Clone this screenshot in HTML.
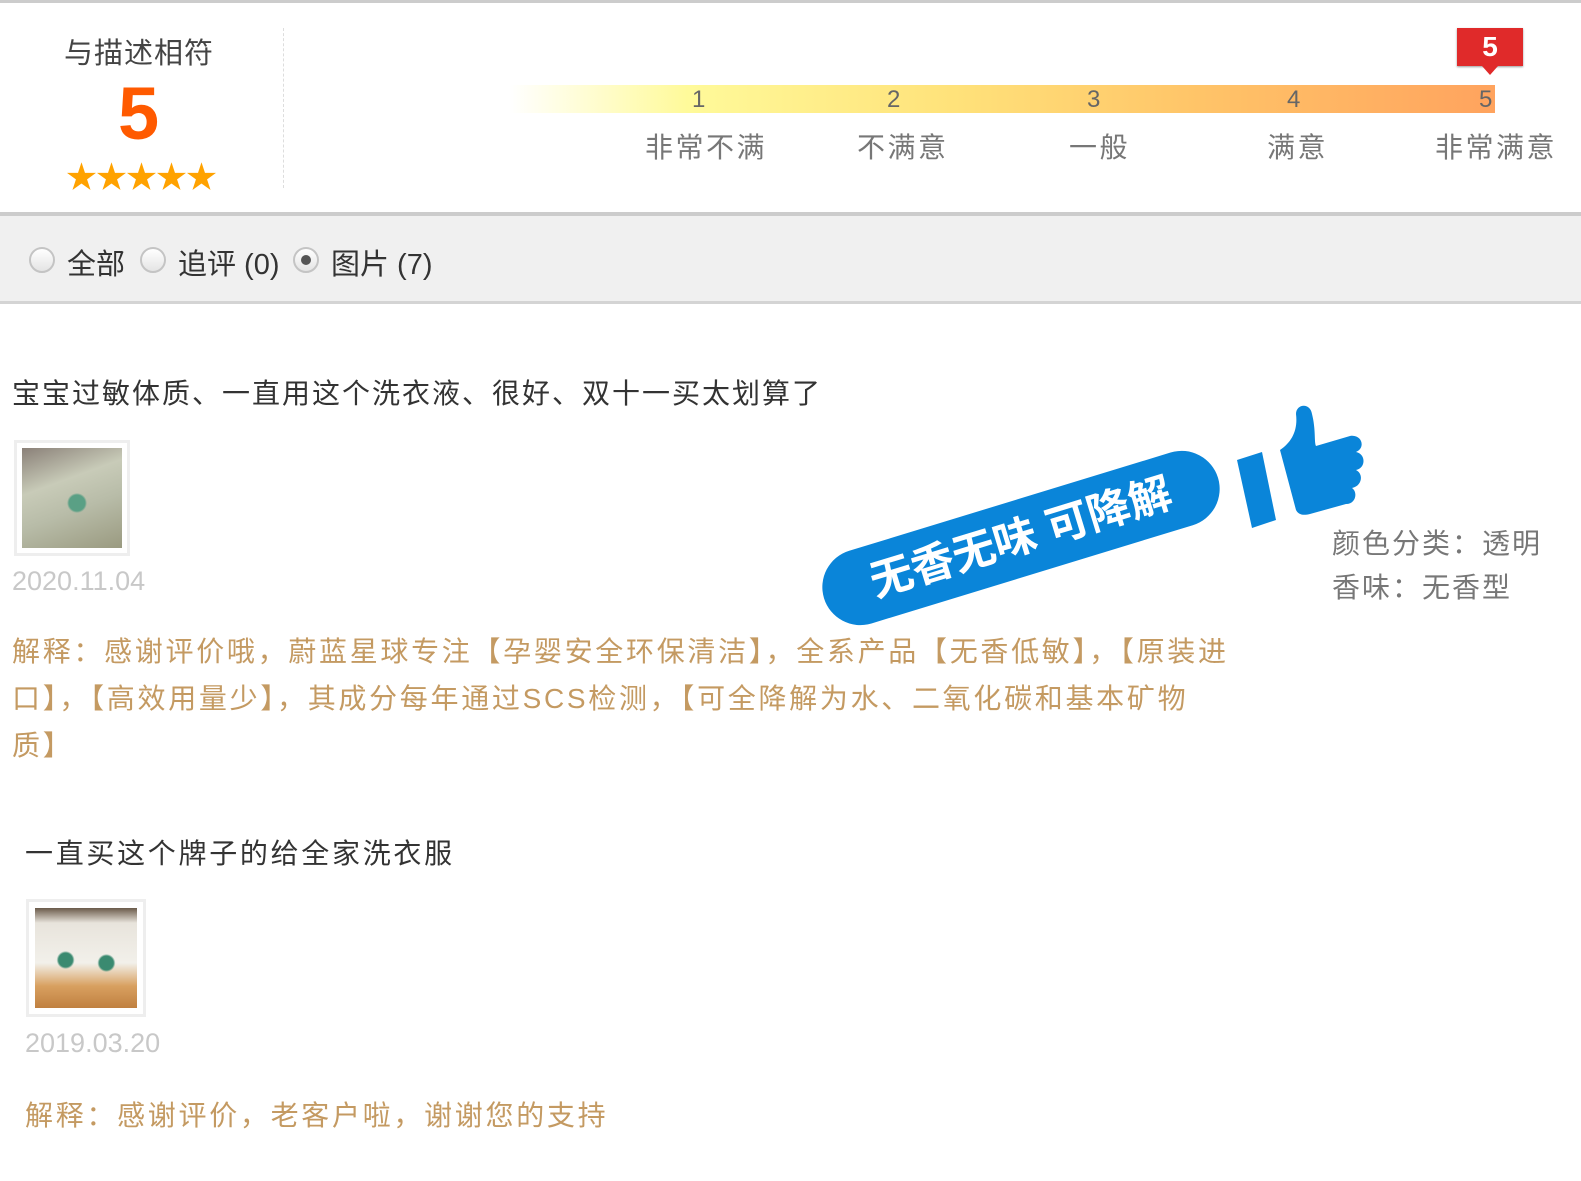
<!DOCTYPE html>
<html><head><meta charset="utf-8"><style>
*{margin:0;padding:0;box-sizing:border-box}
body{width:1581px;height:1181px;background:#fff;position:relative;overflow:hidden;font-family:"Liberation Sans","Noto Sans CJK SC",sans-serif;color:#333}
.a{position:absolute;white-space:nowrap}
.t{font-size:28px;letter-spacing:2px}
.ex{color:#c49a62;font-size:28px;line-height:47px;letter-spacing:2.7px}
.date{color:#c8c8c8;font-size:27px}
.lab{font-size:28px;color:#777;letter-spacing:2.5px}
.thumb{position:absolute;border:3px solid #eee;background:#fff}
.radio{position:absolute;width:26px;height:26px;border-radius:50%;border:2px solid #c4c4c4;background:linear-gradient(#fff,#e4e4e4);top:247px}
</style></head><body>
<div class="a" style="left:0;top:0;width:1581px;height:3px;background:#ccc"></div>
<div class="a" style="left:64px;top:30px;font-size:29px;color:#444;letter-spacing:1px">与描述相符</div>
<div class="a" style="left:118px;top:74px;font-size:74px;font-weight:bold;color:#ff5a00;line-height:80px">5</div>
<div class="a" style="left:66px;top:152px;font-size:31px;color:#ffa200;letter-spacing:-1px">★★★★★</div>
<div class="a" style="left:283px;top:28px;width:0;height:160px;border-left:1px dashed #ddd"></div>
<div class="a" style="left:510px;top:85px;width:985px;height:28px;background:linear-gradient(90deg,#fff 0%,#fffa9a 18%,#ffe27a 45%,#ffc468 70%,#ffa35e 100%)"></div>
<div class="a" style="left:692px;top:86px;font-size:24px;color:#666">1</div>
<div class="a" style="left:887px;top:86px;font-size:24px;color:#666">2</div>
<div class="a" style="left:1087px;top:86px;font-size:24px;color:#666">3</div>
<div class="a" style="left:1287px;top:86px;font-size:24px;color:#666">4</div>
<div class="a" style="left:1479px;top:86px;font-size:24px;color:#666">5</div>
<div class="a lab" style="left:645px;top:126px">非常不满</div>
<div class="a lab" style="left:857px;top:126px">不满意</div>
<div class="a lab" style="left:1069px;top:126px">一般</div>
<div class="a lab" style="left:1267px;top:126px">满意</div>
<div class="a lab" style="left:1435px;top:126px">非常满意</div>
<div class="a" style="left:1457px;top:28px;width:66px;height:38px;background:#e02a2a;color:#fff;font-size:28px;font-weight:bold;text-align:center;line-height:38px;box-shadow:0 1px 2px #999">5</div>
<div class="a" style="left:1482px;top:66px;width:0;height:0;border-left:8px solid transparent;border-right:8px solid transparent;border-top:9px solid #e02a2a"></div>
<div class="a" style="left:0;top:212px;width:1581px;height:4px;background:#ccc"></div>
<div class="a" style="left:0;top:216px;width:1581px;height:86px;background:#f0f0f0"></div>
<div class="a" style="left:0;top:301px;width:1581px;height:3px;background:#d4d4d4"></div>
<div class="radio" style="left:29px"></div>
<div class="a" style="left:67px;top:241px;font-size:29px;color:#333">全部</div>
<div class="radio" style="left:140px"></div>
<div class="a" style="left:178px;top:241px;font-size:29px;color:#333">追评 (0)</div>
<div class="radio" style="left:293px"><div style="width:10px;height:10px;border-radius:50%;background:#555;margin:6px"></div></div>
<div class="a" style="left:331px;top:241px;font-size:29px;color:#333">图片 (7)</div>

<div class="a t" style="left:12px;top:372px">宝宝过敏体质、一直用这个洗衣液、很好、双十一买太划算了</div>
<div class="thumb" style="left:14px;top:440px;width:116px;height:116px"><div style="margin:5px;width:100px;height:100px;background:radial-gradient(circle at 55% 55%,#5aa085 0 8px,transparent 10px),linear-gradient(160deg,#8a8078,#c8cbb8 35%,#b8bca8 60%,#9a9a80)"></div></div>
<div class="a date" style="left:12px;top:566px">2020.11.04</div>
<div class="a ex" style="left:12px;top:628px">解释：感谢评价哦，蔚蓝星球专注【孕婴安全环保清洁】，全系产品【无香低敏】，【原装进<br>口】，【高效用量少】，其成分每年通过SCS检测，【可全降解为水、二氧化碳和基本矿物<br>质】</div>

<div class="a" style="left:815px;top:500px;width:412px;height:76px;background:#0a85d9;border-radius:38px;transform:rotate(-17deg);color:#fff;font-size:43px;font-weight:bold;line-height:76px;text-align:center">无香无味 可降解</div>
<svg class="a" style="left:1232px;top:402px" width="135" height="128" viewBox="0 0 135 128">
<path d="M5 58 L30 50 L44 118 L20 126 Z" fill="#0a85d9"/>
<path d="M48 48 C60 40 66 28 64 12 C64 2 78 0 80 12 C84 28 82 40 84 44 L118 34 C130 32 134 46 124 50 C134 52 134 66 124 68 C132 72 130 84 120 86 C126 90 124 102 114 102 L78 112 C70 114 66 112 64 108 Z" fill="#0a85d9"/>
</svg>
<div class="a" style="left:1332px;top:522px;font-size:28px;color:#777;letter-spacing:2px">颜色分类：透明</div>
<div class="a" style="left:1332px;top:566px;font-size:28px;color:#777;letter-spacing:2px">香味：无香型</div>

<div class="a t" style="left:25px;top:832px;letter-spacing:2.7px">一直买这个牌子的给全家洗衣服</div>
<div class="thumb" style="left:26px;top:899px;width:120px;height:118px"><div style="margin:6px;width:102px;height:100px;background:radial-gradient(circle at 30% 52%,#3a8a70 0 7px,transparent 9px),radial-gradient(circle at 70% 55%,#3a8a70 0 7px,transparent 9px),linear-gradient(180deg,#6a5a4a 0%,#e8e4dc 15%,#f2f0ea 55%,#d8a060 78%,#c08040 100%)"></div></div>
<div class="a date" style="left:25px;top:1028px">2019.03.20</div>
<div class="a ex" style="left:25px;top:1092px">解释：感谢评价，老客户啦，谢谢您的支持</div>
</body></html>
